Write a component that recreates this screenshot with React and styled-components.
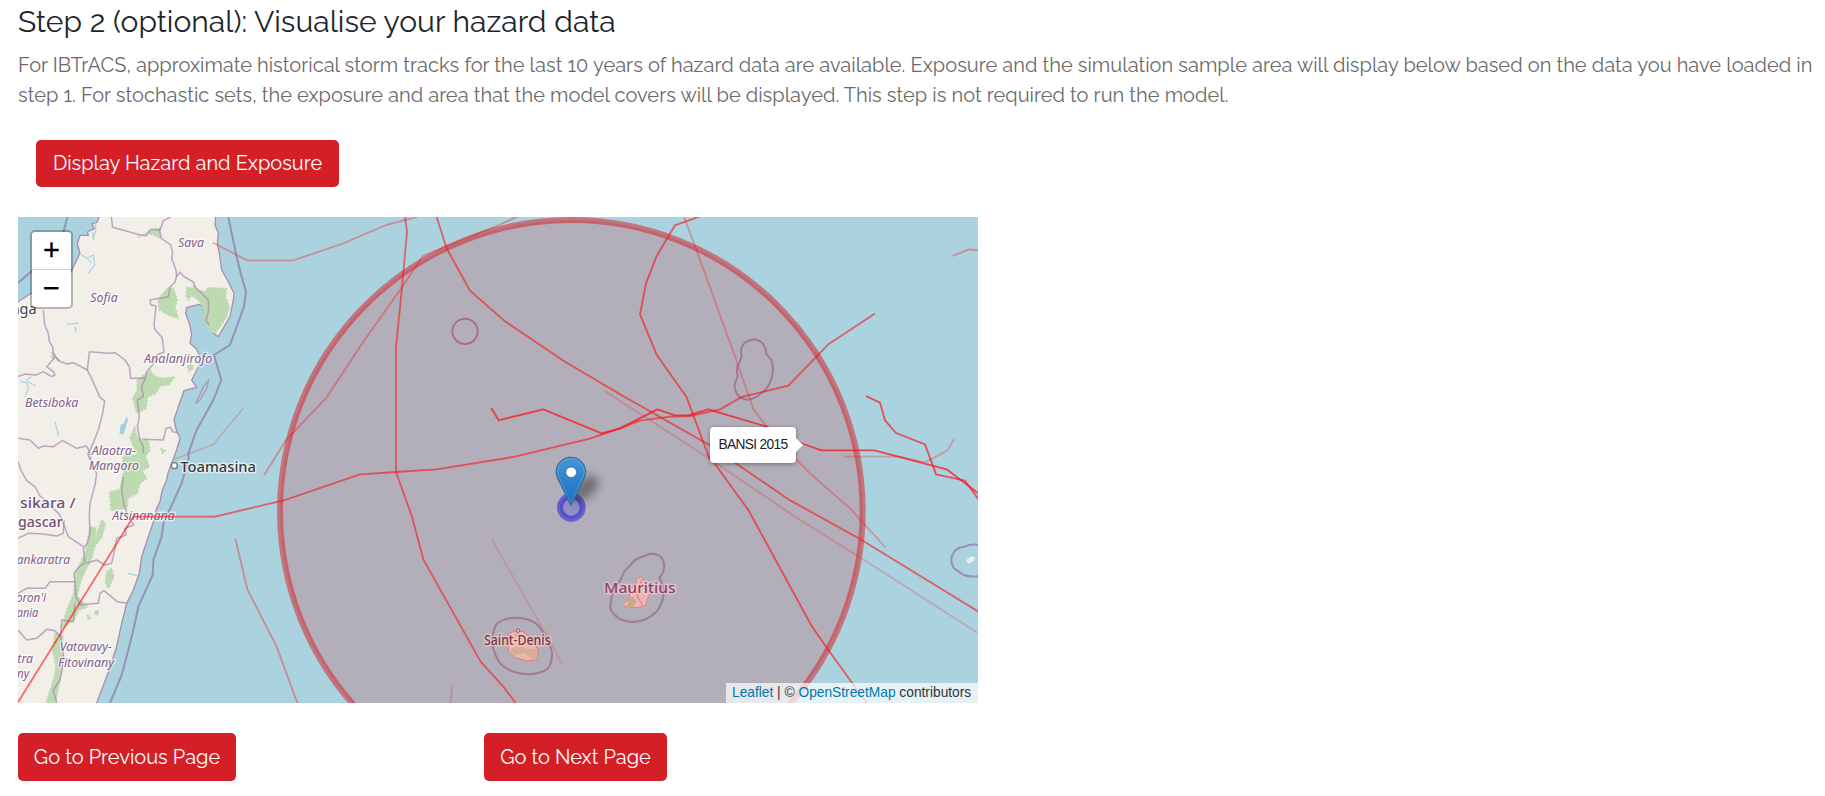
import React from "react";
import styled, { createGlobalStyle } from "styled-components";

const GlobalStyle = createGlobalStyle`
  * { box-sizing: border-box; }
  html, body { margin: 0; background: #fff; overflow: hidden; }
  body {
    font-family: Raleway, Lato, "Open Sans", sans-serif;
    font-variant-numeric: oldstyle-nums;
    font-feature-settings: "onum" 1, "lnum" 0;
  }
`;

const Page = styled.main`
  display: flex;
  flex-direction: column;
  align-items: flex-start;
  height: 796px;
  padding: 4px 0 0 18px;
`;

const Title = styled.h1`
  margin: 0;
  height: 46px;
  font-size: 30px;
  line-height: 36px;
  font-weight: 400;
  letter-spacing: 0.04px;
  color: #212529;
  white-space: nowrap;
`;

const Description = styled.p`
  margin: 0;
  height: 90px;
  font-size: 20px;
  line-height: 30px;
  font-weight: 400;
  letter-spacing: 0.022px;
  color: #6a6a6a;
  white-space: nowrap;
`;

const Line = styled.span`
  display: block;
`;

const Button = styled.button`
  width: ${(p) => p.$width};
  height: ${(p) => p.$height || "48px"};
  padding: 0 0 1px;
  border: 0;
  border-radius: 5px;
  background: #d41f27;
  color: #fff;
  font: 400 20px/30px Raleway, Lato, "Open Sans", sans-serif;
  white-space: nowrap;
`;

const DisplayRow = styled.div`
  padding-left: 18px;
  height: 77px;
`;

const NavRow = styled.nav`
  display: flex;
  gap: 248px;
  margin-top: 30px;
`;

const MapFrame = styled.section`
  position: relative;
  width: 960px;
  height: 486px;
  overflow: hidden;
  background: #aad3df;
  font-family: "Liberation Sans", Arial, sans-serif;
  font-variant-numeric: normal;
  font-feature-settings: normal;
`;

const MapCanvas = styled.svg`
  display: block;
  width: 960px;
  height: 486px;
`;

const ZoomControl = styled.div`
  position: absolute;
  left: 12px;
  top: 13px;
  display: flex;
  flex-direction: column;
  width: 43px;
  border: 2.5px solid rgba(0, 0, 0, 0.25);
  border-radius: 5px;
  background: #fff;
  background-clip: padding-box;
`;

const ZoomButton = styled.button`
  height: ${(p) => (p.$divider ? "38px" : "37px")};
  padding: 0 0 1px;
  border: 0;
  border-bottom: ${(p) => (p.$divider ? "1px solid #ccc" : "0")};
  background: transparent;
  color: #000;
  font: 400 29px/34px "Liberation Sans", Arial, sans-serif;
  -webkit-text-stroke: 0.3px #000;
`;

const Tooltip = styled.div`
  position: absolute;
  left: 692px;
  top: 210px;
  width: 86px;
  height: 36px;
  border-radius: 4px;
  background: #fff;
  color: #222;
  font-size: 13.75px;
  line-height: 35px;
  letter-spacing: -0.68px;
  text-align: center;
  white-space: nowrap;
  box-shadow: 0 1px 4px rgba(0, 0, 0, 0.4);
  &::after {
    content: "";
    position: absolute;
    left: 100%;
    top: 11px;
    border: 7px solid transparent;
    border-left-color: #fff;
    border-right: 0;
  }
`;

const Attribution = styled.div`
  position: absolute;
  right: 0;
  bottom: 0;
  width: 252px;
  height: 20px;
  padding-left: 6px;
  background: rgba(255, 255, 255, 0.7);
  color: #333;
  font-size: 13.75px;
  line-height: 19px;
  white-space: nowrap;
`;

const MapLink = styled.a`
  color: #0078a8;
`;

const LAND =
  "M300 40L292 66 275 72 283 86 262 96 265 106 240 106 232 130 240 160 225 190 212 218 190 240 100 276 54 305 40 312V1520H287L290 1509 320 1430 350 1340 365 1270 380 1210 400 1170 418 1120 425 1070 445 1010 462 960 470 925 480 905 487 870 500 840 504 820 515 790 530 750 540 715 529 690 522 660 535 620 552 572 590 562 575 540 598 495 600 470 590 448 570 430 575 404 568 370 557 340 560 322 600 313 612 325 615 350 625 370 640 400 655 410 690 350 700 300 702 280 685 245 665 210 659 165 652 130 655 100 645 75 648 40Z";

const FORESTS = [
  "M505 262L520 266 532 300 525 320 535 355 510 347 478 330 474 300Z",
  "M560 262L578 265 582 252 590 270 615 275 625 263 680 266 676 290 688 318 680 350 666 372 645 400 628 392 615 365 612 328 598 303 575 285 565 300 558 285Z",
  "M412 112L435 102 455 90 480 84 480 115 462 105 440 100Z",
  "M450 512L466 530 490 535 525 530 505 555 480 557 468 580 442 592 438 625 410 640 398 595 412 570 412 540Z",
  "M404 680L412 712 445 722 450 750 436 768 448 800 425 812 440 835 420 850 412 880 384 895 380 925 334 932 328 875 358 870 372 815 368 780 372 765 412 765 390 715Z",
  "M270 980L288 985 285 1020 305 960 316 970 306 1010 284 1040 272 1085 256 1110 240 1150 232 1190 262 1220 235 1232 222 1260 185 1285 200 1230 220 1185 230 1110 256 1060Z",
  "M165 1300L190 1310 182 1350 192 1370 180 1440 166 1509H138L160 1440 168 1400 158 1350Z",
  "M320 1115L335 1105 342 1130 325 1165 316 1148Z",
  "M562 498L575 488 580 505 568 515Z",
  "M156 458L166 460 162 478 154 470Z",
  "M482 745L496 752 488 760Z",
  "M262 1245L272 1252 264 1260Z",
  "M284 1235L294 1230 296 1242 286 1246Z",
];

const REGION_BORDERS = [
  "M334 51L338 82 410 102 438 108 452 88 480 90 490 62 512 51",
  "M478 90L484 115 512 135 518 158 515 175 528 210 530 228 525 246 510 262 505 290 450 300 452 314 468 318 462 375 466 390 486 412 492 456 470 465 462 490 440 515 436 535",
  "M528 232L540 216 552 230 580 246 586 262 610 285 625 300 626 330 618 362 628 376",
  "M130 330L134 375 145 400 148 425 158 440 160 460 175 482 200 492 220 488 262 510",
  "M54 530L75 522 108 525 130 515 155 530 165 525 160 515 140 500 145 495 165 470 178 482",
  "M262 510L268 455 325 460 345 458 375 480 388 500 392 535 436 535 425 560 430 590 412 600 418 650 412 680 420 720 430 740 430 760",
  "M262 510L272 530 300 592 314 603 308 640 295 690 275 740 264 762 270 780",
  "M54 715L90 720 115 745 130 738 160 740 188 722 230 745 260 738 270 760",
  "M430 718L490 720 498 685 512 682 518 695 535 698",
  "M54 785L65 815 80 842 105 860 120 888 140 905 180 945 192 975 205 1010 250 1040",
  "M270 760L275 800 290 820 285 855 270 910 268 950 270 1000 262 1030 250 1045 255 1088 238 1100 222 1120 225 1150 228 1190 240 1214 295 1210 300 1180 312 1172 340 1195 352 1205 382 1210",
  "M370 830L365 870 372 915 385 950 402 975 375 985 378 1005 350 1015 345 1045 335 1090 315 1095 290 1080 260 1090",
  "M54 1015L85 1000 130 1002 170 1008 190 1000 192 960",
  "M54 1180L80 1165 135 1165 150 1145 226 1145",
  "M54 1290L80 1320 110 1315 140 1288 165 1292 182 1310 185 1260 220 1265 225 1210",
  "M182 1310L190 1360 188 1400 180 1440 160 1470 170 1509",
  "M626 540L610 560 588 610 600 600 620 565Z",
];

const TERRITORIAL_WATERS = [
  "M685 51L710 170 722 220 738 275 732 320 690 435 642 465 664 540 640 600 590 690 565 760 566 775 545 850 520 905 490 970 485 1010 460 1080 458 1125 415 1220 400 1290 385 1350 365 1425 330 1509",
  "M202 51L190 98",
  "M54 248L100 210",
  "M2225 470Q2218 442 2235 428Q2264 408 2288 430Q2298 443 2299 462L2314 480Q2322 500 2316 530Q2310 555 2293 572Q2265 598 2245 599Q2212 598 2204 565Q2202 548 2213 530Q2206 507 2218 488Z",
  "M1485 1280Q1492 1265 1515 1258Q1545 1248 1588 1260Q1612 1268 1626 1292L1640 1325Q1658 1345 1656 1365Q1654 1400 1638 1410Q1600 1430 1550 1418Q1510 1408 1494 1380Q1474 1345 1477 1310Z",
  "M1864 1134L1873 1115 1888 1099Q1906 1073 1934 1068Q1960 1053 1982 1070Q1998 1087 1990 1115L1978 1134Q1994 1160 1990 1190Q1985 1215 1970 1235Q1938 1265 1900 1266Q1865 1264 1850 1250Q1826 1232 1832 1208Q1835 1180 1850 1158Z",
  "M2940 1036Q2915 1030 2894 1040Q2865 1042 2856 1067Q2850 1090 2862 1105Q2880 1118 2892 1125Q2910 1132 2940 1128",
];

const RIVERS = [
  "M283 60L288 88 280 118 278 95",
  "M245 165L262 175 280 165 284 195 265 220",
  "M265 178L275 190",
  "M75 590L85 565 80 540 95 530",
  "M62 545L78 548",
  "M85 545L108 558",
  "M200 372L235 370M225 380L228 397",
  "M385 1120L412 1127",
  "M165 665L176 710",
];

const TRACKS = [
  [0.33, "640,129 742,181 880,181 1030,130 1158,75 1250,51"],
  [0.2, "525,777 640,733 728,627"],
  [0.58, "54,1507 400,950 645,950 855,900 1080,823 1188,816 1310,808 1545,770 1770,716 1860,685 1920,662 2010,650 2070,648 2160,628 2225,591 2365,557 2485,433 2623,342"],
  [0.7, "1475,626 1496,661 1630,628 1805,700 1860,685 1972,628 2025,646 2065,646 2125,628 2300,680 2410,732 2465,751 2623,751 2840,808 2940,884"],
  [0.55, "1215,51 1221,95 1206,262 1188,440 1188,816 1236,950 1270,1078 1442,1385 1510,1460 1547,1509"],
  [0.58, "1310,51 1340,145 1410,272 1515,364 1695,485 1860,583 2128,735 2205,788 2365,898 2580,1017 2940,1238"],
  [0.36, "1550,51 1490,78 1268,168 1206,262 1090,425 980,592 860,718 793,824"],
  [0.6, "2095,51 2025,76 1970,168 1938,250 1920,343 1970,464 2060,592 2128,775 2145,792 2245,930 2435,1278 2485,1350 2600,1509"],
  [0.3, "2052,51 2082,130 2130,262 2205,470 2260,627 2300,680 2390,780 2430,820 2550,925 2655,1041"],
  [0.22, "1815,574 2120,770 2385,950 2580,1072 2930,1297"],
  [0.65, "2600,589 2640,608 2655,661 2688,699 2775,733 2808,823 2895,842 2940,904"],
  [0.27, "2533,770 2700,770 2775,787 2842,752 2862,717"],
  [0.36, "2860,167 2908,148 2940,151"],
  [0.36, "707,1020 742,1168 830,1340 892,1509"],
  [0.15, "1477,1021 1625,1280 1685,1388"],
  [0.2, "1357,1459 1351,1509"],
];

const REGION_LABELS = [
  ["Sava", 534, 141, 78],
  ["Sofia", 271, 305, 82],
  ["Analanjirofo", 432, 488, 205],
  ["Betsiboka", 75, 622, 160],
  ["Alaotra-", 275, 766, 132],
  ["Mangoro", 267, 811, 150],
  ["Atsinanana", 337, 961, 187],
  ["Vatovavy-", 179, 1354, 156],
  ["Fitovinany", 174, 1400, 168],
  ["ankaratra", 50, 1092, 160],
  ["oron'i", 48, 1205, 90],
  ["ania", 50, 1250, 65],
  ["tra", 52, 1390, 47],
  ["ny", 51, 1433, 36],
];

const MapText = styled.text`
  font-family: "Noto Sans", "Open Sans", sans-serif;
  font-size: ${(p) => p.$size}px;
  font-style: ${(p) => (p.$italic ? "italic" : "normal")};
  font-weight: ${(p) => p.$weight || 400};
  fill: ${(p) => p.$color};
  paint-order: stroke;
  stroke: rgba(255, 255, 255, 0.6);
  stroke-width: 9px;
  stroke-linejoin: round;
`;

function MapLabel({ text, x, y, width, ...style }) {
  return (
    <MapText x={x} y={y} textLength={width} lengthAdjust="spacingAndGlyphs" {...style}>
      {text}
    </MapText>
  );
}

function BaseMap() {
  return (
    <g fill="none" strokeLinejoin="round">
      <path d={LAND} fill="#f2efe9" stroke="#a88fae" strokeWidth="4" />
      {FORESTS.map((d) => (
        <path key={d} d={d} fill="#bddab1" stroke="#bddab1" strokeWidth="5" strokeDasharray="7 5" />
      ))}
      {RIVERS.map((d) => (
        <path key={d} d={d} stroke="#a3d3e0" strokeWidth="3.5" />
      ))}
      <path d="M380 648L384 660 375 690 368 705 358 700 362 675 372 670Z" fill="#9fd0df" />
      {REGION_BORDERS.map((d) => (
        <path key={d} d={d} stroke="#ab8bb0" strokeOpacity="0.75" strokeWidth="4.5" />
      ))}
      {TERRITORIAL_WATERS.map((d) => (
        <path key={d} d={d} stroke="#9489b0" strokeOpacity="0.9" strokeWidth="6" />
      ))}
      <circle cx="1395" cy="394" r="38" stroke="#a382a4" strokeWidth="6" />
      <path d="M1525 1302L1545 1292 1570 1295 1585 1310 1595 1325 1615 1347 1611 1380 1580 1383 1545 1373 1525 1353Z" fill="#f2ded0" stroke="#e08d96" strokeWidth="3" />
      <path d="M1533 1345L1560 1338 1580 1348 1612 1345 1608 1378 1592 1376 1575 1358 1550 1365 1535 1360ZM1545 1300L1562 1298 1558 1308 1545 1310Z" fill="#d6d4ae" />
      <path d="M1912 1135L1925 1130 1934 1145 1934 1165 1950 1180 1940 1200 1938 1216 1915 1222 1875 1222 1870 1212 1885 1200 1892 1170 1908 1150Z" fill="#f2ded8" stroke="#e3a0a8" strokeWidth="3" />
      <path d="M1880 1198L1898 1190 1910 1205 1895 1222 1875 1222 1885 1210Z" fill="#c9ca9e" />
      <path d="M1928 1215L1912 1190 1918 1160 1926 1138" stroke="#ee9c9f" strokeWidth="4" />
      <path d="M2898 1080L2912 1070 2926 1072 2922 1082 2905 1091Z" fill="#f2efe0" />
      <circle cx="1554" cy="1292" r="5" fill="#fff" stroke="#7f6060" strokeWidth="3" />
      {REGION_LABELS.map(([text, x, y, width]) => (
        <MapLabel key={text} text={text} x={x} y={y} width={width} $size={39} $italic $color="#82608b" />
      ))}
      <MapLabel text="nga" x={32} y={343} width={78} $size={44} $color="#444" />
      <MapLabel text="Toamasina" x={541} y={815} width={227} $size={44} $weight={500} $color="#3a3a3a" />
      <MapLabel text="sikara /" x={60} y={923} width={167} $size={45} $weight={500} $color="#6f5077" />
      <MapLabel text="gascar" x={54} y={980} width={134} $size={45} $weight={500} $color="#6f5077" />
      <MapLabel text="Mauritius" x={1812} y={1180} width={215} $size={45} $weight={500} $color="#7c4a7f" />
      <MapLabel text="Saint-Denis" x={1452} y={1335} width={200} $size={41} $weight={500} $color="#5a3e48" />
      <circle cx="523" cy="797" r="9" fill="#fff" stroke="#777" strokeWidth="4" />
    </g>
  );
}

function HazardOverlay() {
  return (
    <g fill="none" strokeLinecap="round" strokeLinejoin="round">
      <circle cx="1714" cy="934" r="874" fill="#d41f27" fillOpacity="0.2" stroke="#d41f27" strokeOpacity="0.52" strokeWidth="18" />
      {TRACKS.map(([opacity, points]) => (
        <polyline key={points} points={points} stroke="#ff0d12" strokeOpacity={opacity} strokeWidth="5.5" />
      ))}
      <circle cx="1714" cy="922" r="34" fill="#1a10e0" fillOpacity="0.2" stroke="#1a10e0" strokeOpacity="0.5" strokeWidth="18" />
    </g>
  );
}

function Marker() {
  return (
    <g>
      <ellipse cx="1754" cy="866" rx="50" ry="28" transform="rotate(-42 1754 866)" fill="#222" opacity="0.45" filter="url(#marker-shadow)" />
      <g transform="translate(1666.5 770) scale(3.7 3.6)">
        <path
          d="M12.5 0.6C5.9 0.6 0.6 6 0.6 12.6C0.6 15.8 2 18.4 3.4 21.3L12.5 40.6L21.6 21.3C23 18.4 24.4 15.8 24.4 12.6C24.4 6 19.1 0.6 12.5 0.6Z"
          fill="url(#marker-blue)"
          stroke="#2e6e9f"
          strokeWidth="1"
        />
        <path
          d="M12.5 1.7C6.5 1.7 1.7 6.6 1.7 12.6C1.7 15.5 3 18 4.4 20.8L12.5 38.1L20.6 20.8C22 18 23.3 15.5 23.3 12.6C23.3 6.6 18.5 1.7 12.5 1.7Z"
          fill="none"
          stroke="#fff"
          strokeOpacity="0.13"
          strokeWidth="1.1"
        />
        <circle cx="12.7" cy="13" r="4.4" fill="#fff" stroke="#2e6e9f" strokeWidth="0.7" />
      </g>
    </g>
  );
}

function HazardMap() {
  return (
    <MapFrame>
      <MapCanvas viewBox="54 51 2880 1458">
        <defs>
          <linearGradient id="marker-blue" x1="0" y1="0" x2="0" y2="1">
            <stop offset="0" stopColor="#4796d0" />
            <stop offset="0.75" stopColor="#1f78c8" />
            <stop offset="1" stopColor="#2068a8" />
          </linearGradient>
          <filter id="marker-shadow" x="-50%" y="-80%" width="200%" height="260%">
            <feGaussianBlur stdDeviation="13" />
          </filter>
        </defs>
        <BaseMap />
        <HazardOverlay />
        <Marker />
      </MapCanvas>
      <ZoomControl>
        <ZoomButton $divider>+</ZoomButton>
        <ZoomButton>−</ZoomButton>
      </ZoomControl>
      <Tooltip>BANSI 2015</Tooltip>
      <Attribution>
        <MapLink>Leaflet</MapLink> | © <MapLink>OpenStreetMap</MapLink> contributors
      </Attribution>
    </MapFrame>
  );
}

export default function App() {
  return (
    <Page>
      <GlobalStyle />
      <Title>Step 2 (optional): Visualise your hazard data</Title>
      <Description>
        <Line>
          For IBTrACS, approximate historical storm tracks for the last 10 years of hazard data are available. Exposure and the simulation sample area will display below based on the data you have loaded in
        </Line>
        <Line>
          step 1. For stochastic sets, the exposure and area that the model covers will be displayed. This step is not required to run the model.
        </Line>
      </Description>
      <DisplayRow>
        <Button $width="303px" $height="47px">Display Hazard and Exposure</Button>
      </DisplayRow>
      <HazardMap />
      <NavRow>
        <Button $width="218px">Go to Previous Page</Button>
        <Button $width="183px">Go to Next Page</Button>
      </NavRow>
    </Page>
  );
}
